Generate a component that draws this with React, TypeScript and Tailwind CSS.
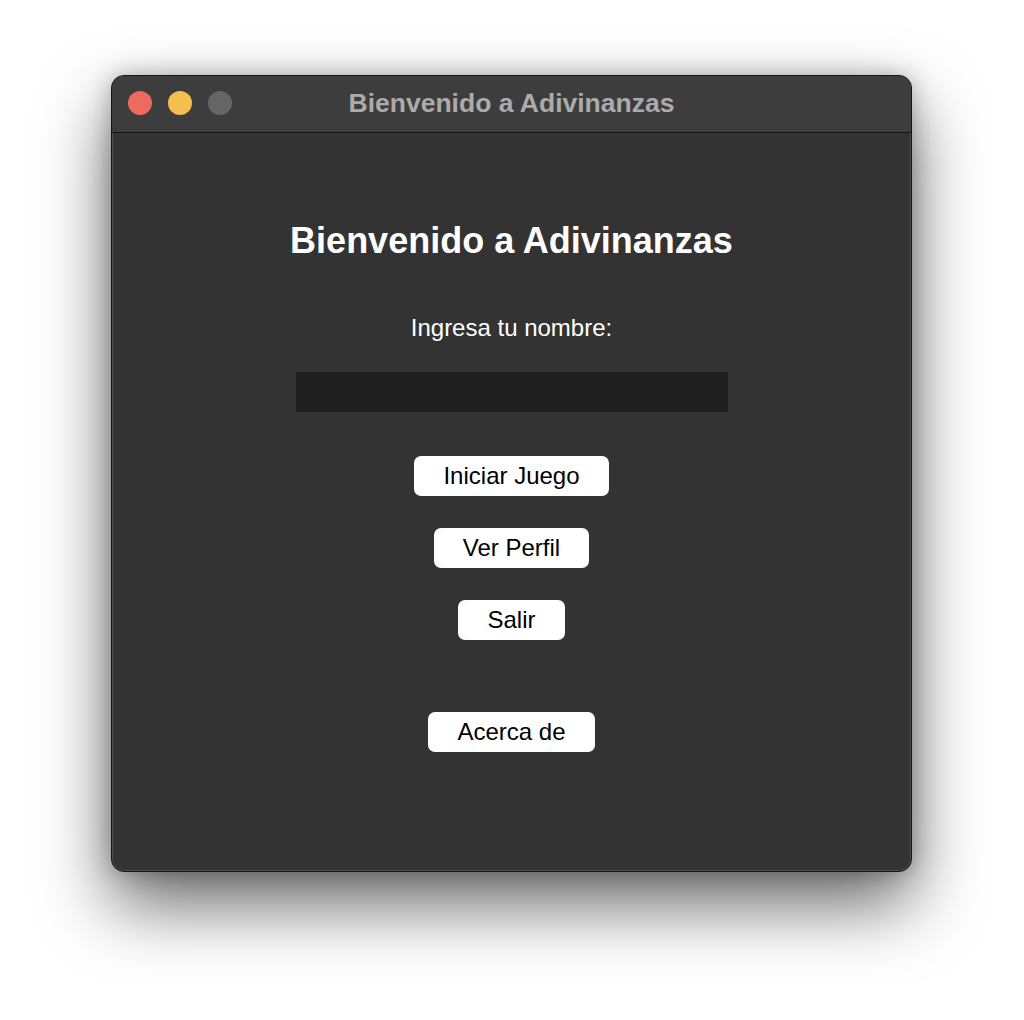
import React from "react";

const font = { fontFamily: '"Liberation Sans", Arial, sans-serif' };

function Btn({ label }: { label: string }) {
  return (
    <button className="h-[40px] px-[29px] rounded-[7px] bg-white text-black text-[24px] leading-[28px]">
      {label}
    </button>
  );
}

export default function App() {
  return (
    <div className="w-[1024px] h-[1020px] bg-white pt-[75px] pl-[111px]" style={font}>
      <div className="w-[801px] h-[797px] rounded-[13px] border border-[#151515] bg-[#333333] overflow-hidden flex flex-col shadow-[0_32px_70px_rgba(0,0,0,0.6),0_0_22px_rgba(0,0,0,0.25),inset_0_0_0_1px_rgba(255,255,255,0.14)]">
        <div className="relative h-[57px] bg-[#3d3d3d] border-b border-[#161616] flex items-center justify-center shrink-0">
          <div className="absolute left-[16px] top-[15px] flex gap-[16px]">
            <div className="w-[24px] h-[24px] rounded-full bg-[#ee6a5f]" />
            <div className="w-[24px] h-[24px] rounded-full bg-[#f5bf4f]" />
            <div className="w-[24px] h-[24px] rounded-full bg-[#656565]" />
          </div>
          <div className="text-[26.5px] font-bold text-[#ababab] leading-[30px] -mt-[2px]">Bienvenido a Adivinanzas</div>
        </div>
        <div className="flex-1 flex flex-col items-center pt-[88px]">
          <h1 className="text-[36px] leading-[40px] font-bold text-white">Bienvenido a Adivinanzas</h1>
          <div className="mt-[53px] text-[24px] leading-[28px] text-white">Ingresa tu nombre:</div>
          <div className="mt-[30px] w-[432px] h-[40px] bg-[#1f1f1f]" />
          <div className="mt-[44px] flex flex-col items-center gap-[32px]">
            <Btn label="Iniciar Juego" />
            <Btn label="Ver Perfil" />
            <Btn label="Salir" />
          </div>
          <div className="mt-[72px]">
            <Btn label="Acerca de" />
          </div>
        </div>
      </div>
    </div>
  );
}
